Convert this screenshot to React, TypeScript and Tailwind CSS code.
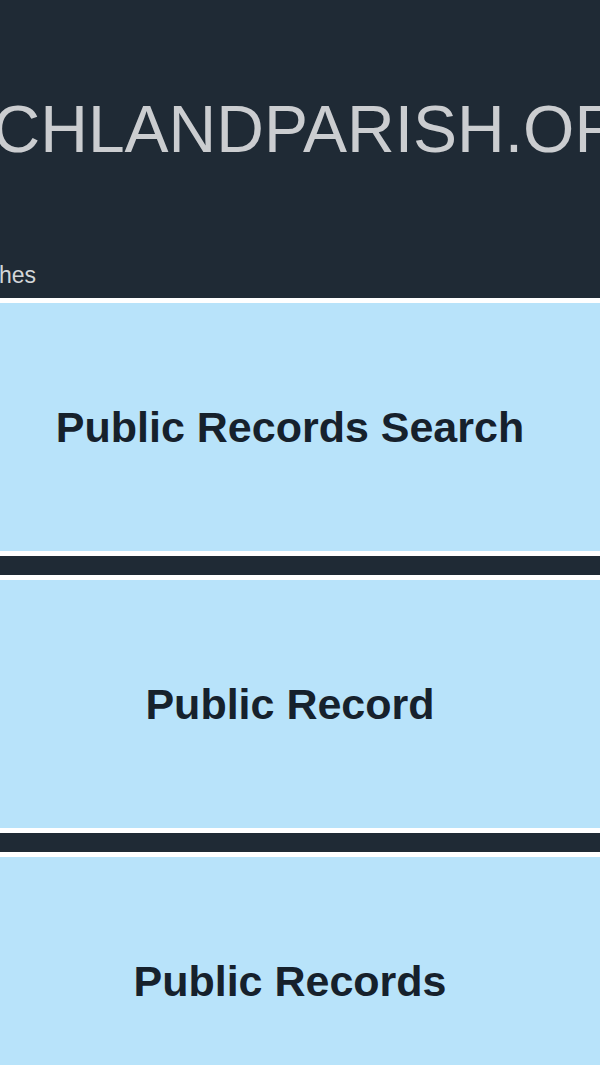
import React from 'react';

const cards = ['Public Records Search', 'Public Record', 'Public Records'];

const App: React.FC = () => {
  return (
    <div className="min-h-[1065px] overflow-hidden bg-[#1f2a35] font-['Liberation_Sans',Arial,sans-serif]">
      <header className="h-[298px] pt-[96px]">
        <div className="flex justify-center whitespace-nowrap">
          <h1 className="text-[66px] leading-none font-normal text-[#cbcdd0]">RICHLANDPARISH.ORG</h1>
        </div>
        <div className="mt-[102px] flex w-[36px] justify-end whitespace-nowrap">
          <span className="text-[23px] leading-none text-[#d3d6d9]">Public Records Searches</span>
        </div>
      </header>
      <ul className="flex flex-col gap-[19px]">
        {cards.map((title) => (
          <li key={title} className="border-y-[5px] border-white bg-[#b8e3fa]">
            <div className="flex h-[248px] items-center justify-center pr-5">
              <h2 className="text-[43px] leading-none font-bold text-[#16212c]">{title}</h2>
            </div>
          </li>
        ))}
      </ul>
    </div>
  );
};

export default App;
